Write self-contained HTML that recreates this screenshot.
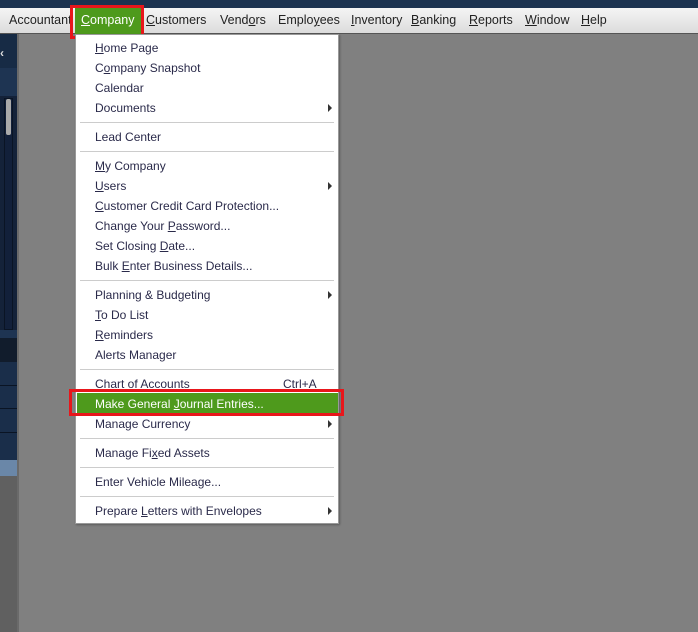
<!DOCTYPE html><html><head><style>
*{margin:0;padding:0;box-sizing:border-box}
body{width:698px;height:632px;overflow:hidden;background:#808080;font-family:"Liberation Sans",Arial,sans-serif;font-size:12px;position:relative}
.a{position:absolute}
.mb{top:8px;left:0;width:698px;height:26px;background:linear-gradient(#f4f4f4,#dcdcdc);border-bottom:1px solid #555}
.mb span{position:absolute;top:5px;color:#222;font-size:12.5px}
.menu{left:75px;top:34px;width:264px;height:490px;background:#fff;border:1px solid #999;box-shadow:1px 1px 2px rgba(0,0,0,.3)}
.it{position:absolute;left:19px;color:#2a2a4a;font-size:12px;line-height:14px;margin-top:-1px}
.sep{position:absolute;left:4px;right:4px;height:1px;background:#ccc;margin-top:-1px}
.ar{position:absolute;right:6px;width:0;height:0;border-left:4px solid #333;border-top:4px solid transparent;border-bottom:4px solid transparent;margin-top:-1px}
</style></head><body>
<div class="a" style="top:0;left:0;width:698px;height:8px;background:#1c3350"></div>
<div class="a mb">
<span style="left:9px">Accountant</span>
<span style="left:146px"><u>C</u>ustomers</span>
<span style="left:220px">Vend<u>o</u>rs</span>
<span style="left:278px">Emplo<u>y</u>ees</span>
<span style="left:351px"><u>I</u>nventory</span>
<span style="left:411px"><u>B</u>anking</span>
<span style="left:469px"><u>R</u>eports</span>
<span style="left:525px"><u>W</u>indow</span>
<span style="left:581px"><u>H</u>elp</span>
</div>
<div class="a" style="left:75px;top:8px;width:66px;height:26px;background:#4e9a1c"></div>
<div class="a" style="left:81px;top:13px;color:#fff;font-size:12.5px"><u>C</u>ompany</div>
<div class="a" style="left:70px;top:5px;width:74px;height:34px;border:3px solid #e8161b"></div>
<div class="a" style="left:0;top:34px;width:17px;height:34px;background:#172b45"></div>
<div class="a" style="left:0;top:46px;color:#ddd;font-weight:bold;font-size:12px">&lsaquo;</div>
<div class="a" style="left:0;top:68px;width:17px;height:28px;background:#1e3452"></div>
<div class="a" style="left:0;top:96px;width:17px;height:234px;background:#142239"></div>
<div class="a" style="left:4px;top:98px;width:9px;height:232px;background:#12203a;border:1px solid #0a1424"></div>
<div class="a" style="left:6px;top:99px;width:5px;height:36px;background:#aaa;border-radius:2px"></div>
<div class="a" style="left:0;top:330px;width:17px;height:8px;background:#1e3452"></div>
<div class="a" style="left:0;top:338px;width:17px;height:24px;background:#111c2c"></div>
<div class="a" style="left:0;top:362px;width:17px;height:98px;background:#1a2e4a"></div>
<div class="a" style="left:0;top:385px;width:17px;height:1px;background:#0a1424"></div>
<div class="a" style="left:0;top:408px;width:17px;height:1px;background:#0a1424"></div>
<div class="a" style="left:0;top:432px;width:17px;height:1px;background:#0a1424"></div>
<div class="a" style="left:0;top:460px;width:17px;height:16px;background:#6a87a8"></div>
<div class="a" style="left:0;top:476px;width:17px;height:156px;background:#606060"></div>
<div class="a" style="left:17px;top:34px;width:2px;height:598px;background:#6a6a6a"></div>
<div class="a menu">
<div class="it" style="top:7px"><u>H</u>ome Page</div>
<div class="it" style="top:27px">C<u>o</u>mpany Snapshot</div>
<div class="it" style="top:47px">Calendar</div>
<div class="it" style="top:67px">Documents</div><div class="ar" style="top:70px"></div>
<div class="sep" style="top:88px"></div>
<div class="it" style="top:96px">Lead Center</div>
<div class="sep" style="top:117px"></div>
<div class="it" style="top:125px"><u>M</u>y Company</div>
<div class="it" style="top:145px"><u>U</u>sers</div><div class="ar" style="top:148px"></div>
<div class="it" style="top:165px"><u>C</u>ustomer Credit Card Protection...</div>
<div class="it" style="top:185px">Change Your <u>P</u>assword...</div>
<div class="it" style="top:205px">Set Closing <u>D</u>ate...</div>
<div class="it" style="top:225px">Bulk <u>E</u>nter Business Details...</div>
<div class="sep" style="top:246px"></div>
<div class="it" style="top:254px">Planning &amp; Budgeting</div><div class="ar" style="top:257px"></div>
<div class="it" style="top:274px"><u>T</u>o Do List</div>
<div class="it" style="top:294px"><u>R</u>eminders</div>
<div class="it" style="top:314px">Alerts Manager</div>
<div class="sep" style="top:335px"></div>
<div class="it" style="top:343px">Chart of Accounts</div><div class="it" style="top:343px;left:207px">Ctrl+A</div>
<div class="a" style="left:1px;top:358px;width:261px;height:20px;background:#4e9a1c"></div>
<div class="it" style="top:363px;color:#fff">Make General <u>J</u>ournal Entries...</div>
<div class="it" style="top:383px">Manage Currency</div><div class="ar" style="top:386px"></div>
<div class="sep" style="top:404px"></div>
<div class="it" style="top:412px">Manage Fi<u>x</u>ed Assets</div>
<div class="sep" style="top:433px"></div>
<div class="it" style="top:441px">Enter Vehicle Mileage...</div>
<div class="sep" style="top:462px"></div>
<div class="it" style="top:470px">Prepare <u>L</u>etters with Envelopes</div><div class="ar" style="top:473px"></div>
</div>
<div class="a" style="left:69px;top:389px;width:275px;height:27px;border:3px solid #e8161b"></div>
</body></html>
